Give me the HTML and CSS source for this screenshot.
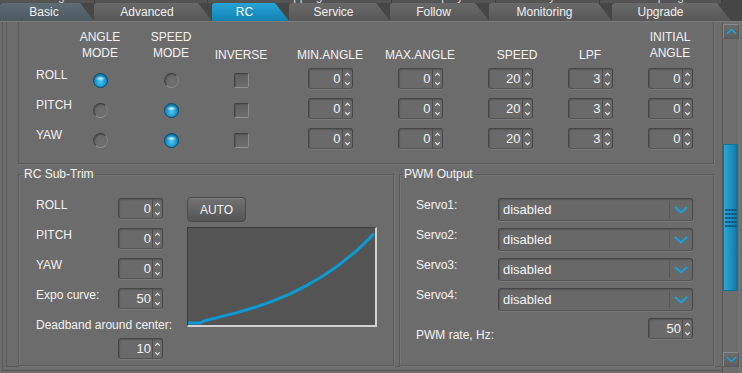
FILE: index.html
```html
<!DOCTYPE html>
<html>
<head>
<meta charset="utf-8">
<link rel="stylesheet" href="styles.css">
</head>
<body>
<svg class="defs" aria-hidden="true">
  <symbol id="spinarr" viewBox="0 0 9 19">
    <path d="M2.3 6.6 L4.5 4.4 L6.7 6.6 M2.3 13.4 L4.5 15.6 L6.7 13.4" fill="none" stroke="#ececec" stroke-width="1.3"/>
  </symbol>
  <symbol id="chev" viewBox="0 0 14 8">
    <path d="M1 1 L7 6.5 L13 1" fill="none" stroke="#1aa2dc" stroke-width="2"/>
  </symbol>
</svg>

<div class="tabbar">
  <div class="back-row">
    <div class="btab w95"><span>Debug</span></div>
    <div class="btab w113"><span>Filters</span></div>
    <div class="btab w184"><span>Mapping</span></div>
    <div class="btab w104"><span>Display</span></div>
    <div class="btab w104"><span>Analysis</span></div>
    <div class="btab w122"><span>Scripting</span></div>
  </div>
  <div class="front-row">
    <div class="tab basic">Basic</div>
    <div class="tab t-adv">Advanced</div>
    <div class="tab active t-rc">RC</div>
    <div class="tab t-svc">Service</div>
    <div class="tab t-fol">Follow</div>
    <div class="tab t-mon">Monitoring</div>
    <div class="tab t-upg">Upgrade</div>
  </div>
</div>

<div class="main">
  <div class="viewport">
    <div class="frame">
      <div class="frame2">
        <section class="axes">
          <div class="hdr"></div>
          <div class="hdr two">ANGLE<br>MODE</div>
          <div class="hdr two">SPEED<br>MODE</div>
          <div class="hdr">INVERSE</div>
          <div class="hdr">MIN.ANGLE</div>
          <div class="hdr">MAX.ANGLE</div>
          <div class="hdr shift">SPEED</div>
          <div class="hdr">LPF</div>
          <div class="hdr two">INITIAL<br>ANGLE</div>

          <div class="lbl">ROLL</div>
          <div class="ctl"><span class="radio on"></span></div>
          <div class="ctl"><span class="radio"></span></div>
          <div class="ctl"><span class="check"></span></div>
          <div class="ctl"><div class="spin"><span class="val">0</span><span class="arr"><svg><use href="#spinarr"/></svg></span></div></div>
          <div class="ctl"><div class="spin"><span class="val">0</span><span class="arr"><svg><use href="#spinarr"/></svg></span></div></div>
          <div class="ctl"><div class="spin"><span class="val">20</span><span class="arr"><svg><use href="#spinarr"/></svg></span></div></div>
          <div class="ctl"><div class="spin"><span class="val">3</span><span class="arr"><svg><use href="#spinarr"/></svg></span></div></div>
          <div class="ctl"><div class="spin"><span class="val">0</span><span class="arr"><svg><use href="#spinarr"/></svg></span></div></div>

          <div class="lbl">PITCH</div>
          <div class="ctl"><span class="radio"></span></div>
          <div class="ctl"><span class="radio on"></span></div>
          <div class="ctl"><span class="check"></span></div>
          <div class="ctl"><div class="spin"><span class="val">0</span><span class="arr"><svg><use href="#spinarr"/></svg></span></div></div>
          <div class="ctl"><div class="spin"><span class="val">0</span><span class="arr"><svg><use href="#spinarr"/></svg></span></div></div>
          <div class="ctl"><div class="spin"><span class="val">20</span><span class="arr"><svg><use href="#spinarr"/></svg></span></div></div>
          <div class="ctl"><div class="spin"><span class="val">3</span><span class="arr"><svg><use href="#spinarr"/></svg></span></div></div>
          <div class="ctl"><div class="spin"><span class="val">0</span><span class="arr"><svg><use href="#spinarr"/></svg></span></div></div>

          <div class="lbl">YAW</div>
          <div class="ctl"><span class="radio"></span></div>
          <div class="ctl"><span class="radio on"></span></div>
          <div class="ctl"><span class="check"></span></div>
          <div class="ctl"><div class="spin"><span class="val">0</span><span class="arr"><svg><use href="#spinarr"/></svg></span></div></div>
          <div class="ctl"><div class="spin"><span class="val">0</span><span class="arr"><svg><use href="#spinarr"/></svg></span></div></div>
          <div class="ctl"><div class="spin"><span class="val">20</span><span class="arr"><svg><use href="#spinarr"/></svg></span></div></div>
          <div class="ctl"><div class="spin"><span class="val">3</span><span class="arr"><svg><use href="#spinarr"/></svg></span></div></div>
          <div class="ctl"><div class="spin"><span class="val">0</span><span class="arr"><svg><use href="#spinarr"/></svg></span></div></div>
        </section>

        <div class="groups">
          <fieldset class="grp sub">
            <legend>RC Sub-Trim</legend>
            <div class="subgrid">
              <div class="lbl">ROLL</div>
              <div class="spin"><span class="val">0</span><span class="arr"><svg><use href="#spinarr"/></svg></span></div>
              <button class="auto">AUTO</button>

              <div class="lbl r2">PITCH</div>
              <div class="spin r2c"><span class="val">0</span><span class="arr"><svg><use href="#spinarr"/></svg></span></div>

              <div class="graph">
                <svg width="187" height="97" viewBox="0 0 187 97">
                  <polyline points="0,95 12,95 16,93 33,88.6 50,84.4 67,79.3 84,73.4 101,66.3 118,57.9 135,48 152,36.2 169,22.3 186,5.8" fill="none" stroke="#0b9ad3" stroke-width="3" stroke-linejoin="round"/>
                </svg>
              </div>

              <div class="lbl r3">YAW</div>
              <div class="spin r3c"><span class="val">0</span><span class="arr"><svg><use href="#spinarr"/></svg></span></div>

              <div class="lbl r4">Expo curve:</div>
              <div class="spin r4c"><span class="val">50</span><span class="arr"><svg><use href="#spinarr"/></svg></span></div>

              <div class="lbl r5">Deadband around center:</div>
              <div class="spin r6c"><span class="val">10</span><span class="arr"><svg><use href="#spinarr"/></svg></span></div>
            </div>
          </fieldset>

          <fieldset class="grp pwm">
            <legend>PWM Output</legend>
            <div class="pwmgrid">
              <div class="lbl">Servo1:</div>
              <div class="combo"><span class="ctext">disabled</span><span class="drop"><svg width="14" height="8"><use href="#chev"/></svg></span></div>
              <div class="lbl">Servo2:</div>
              <div class="combo"><span class="ctext">disabled</span><span class="drop"><svg width="14" height="8"><use href="#chev"/></svg></span></div>
              <div class="lbl">Servo3:</div>
              <div class="combo"><span class="ctext">disabled</span><span class="drop"><svg width="14" height="8"><use href="#chev"/></svg></span></div>
              <div class="lbl">Servo4:</div>
              <div class="combo"><span class="ctext">disabled</span><span class="drop"><svg width="14" height="8"><use href="#chev"/></svg></span></div>
              <div class="lbl rate">PWM rate, Hz:</div>
              <div class="spin rspin"><span class="val">50</span><span class="arr"><svg><use href="#spinarr"/></svg></span></div>
            </div>
          </fieldset>
        </div>
      </div>
    </div>
  </div>

  <div class="scroll">
    <div class="sbtn"><svg width="11" height="7" viewBox="0 0 14 8" class="up"><use href="#chev"/></svg></div>
    <div class="track">
      <div class="thumb"><span class="grip"></span></div>
    </div>
    <div class="sbtn"><svg width="11" height="7" viewBox="0 0 14 8"><use href="#chev"/></svg></div>
  </div>
</div>
</body>
</html>
```

FILE: styles.css
```css
html, body {
  margin: 0;
  padding: 0;
}
body {
  width: 742px;
  height: 373px;
  overflow: hidden;
  background: #6c6c6c;
  font-family: "Liberation Sans", Arial, sans-serif;
  font-size: 12px;
  color: #f3f3f3;
}
.defs {
  position: absolute;
  width: 0;
  height: 0;
  overflow: hidden;
}

/* ---------- tabs ---------- */
.tabbar {
  height: 22px;
  box-sizing: border-box;
  background: #464646;
  border-bottom: 1px solid #7b7b7b;
}
.back-row {
  display: flex;
  height: 3px;
  overflow: hidden;
}
.btab {
  flex: none;
  height: 3px;
  overflow: hidden;
  text-align: center;
  color: #d8d8d8;
  background: #545454;
  border-right: 1px solid #3e3e3e;
  box-sizing: border-box;
}
.btab span {
  display: block;
  margin-top: -11px;
  line-height: 14px;
}
.w95 { width: 95px; }
.w113 { width: 113px; }
.w184 { width: 184px; }
.w104 { width: 104px; }
.w122 { width: 122px; }

.front-row {
  display: flex;
  height: 18px;
}
.tab {
  flex: none;
  height: 18px;
  line-height: 18px;
  box-sizing: border-box;
  padding-right: 12px;
  text-align: center;
  color: #f0f0f0;
  background: linear-gradient(#696969, #575757);
  border-radius: 3px 0 0 0;
  clip-path: polygon(0 0, calc(100% - 14px) 0, 100% 100%, 0 100%);
}
.tab.basic {
  width: 94px;
  padding-left: 6px;
  background: linear-gradient(#5d6c75, #4a5860);
}
.t-adv { width: 118px; }
.t-rc { width: 77px; }
.t-svc { width: 101px; }
.t-fol { width: 99px; }
.t-mon { width: 123px; }
.t-upg { width: 119px; padding-right: 22px; }
.tab.active {
  background: linear-gradient(#26a3d6, #1282b4);
  color: #fff;
}

/* ---------- main area ---------- */
.main {
  display: flex;
  height: 351px;
}
.viewport {
  width: 722px;
  padding-left: 2px;
  box-sizing: border-box;
}
.frame {
  height: 349px;
  box-sizing: border-box;
  border-left: 1px solid #585858;
  border-bottom: 1px solid #585858;
  padding: 0 0 3px 3px;
}
.frame2 {
  height: 345px;
  box-sizing: border-box;
  border-left: 1px solid #5a5a5a;
  border-bottom: 1px solid #5a5a5a;
  padding-left: 11px;
}

/* ---------- axes table ---------- */
.axes {
  width: 696px;
  height: 142px;
  box-sizing: border-box;
  border: 1px solid #5a5a5a;
  border-top: none;
  box-shadow: 1px 1px 0 #767676;
  padding-left: 17px;
  display: grid;
  grid-template-columns: 29px 70px 72px 68px 110px 70px 110px 50px 110px;
  grid-template-rows: 46px 30px 30px 30px;
}
.hdr {
  align-self: end;
  justify-self: center;
  text-align: center;
  white-space: nowrap;
  line-height: 16px;
  padding-bottom: 5px;
}
.hdr.two {
  padding-bottom: 7px;
}
.hdr.shift {
  padding-left: 14px;
}
.lbl {
  white-space: nowrap;
  line-height: 14px;
  align-self: start;
  justify-self: start;
}
.ctl {
  justify-self: center;
  align-self: start;
}

.radio {
  display: block;
  margin-top: 5px;
  width: 15px;
  height: 15px;
  box-sizing: border-box;
  border-radius: 50%;
  border: 1px solid;
  border-color: #3c3c3c #808080 #8e8e8e #434343;
  background: radial-gradient(circle at 60% 65%, #707070, #626262);
  box-shadow: inset 1px 1px 0 #555;
}
.radio.on {
  border-color: #0a4866;
  box-shadow: none;
  background:
    radial-gradient(ellipse 5px 2.5px at 50% 35%, rgba(235, 250, 255, 0.95), rgba(160, 225, 250, 0) 100%),
    radial-gradient(circle at 50% 62%, #4cc6f2 0, #1b9ad2 45%, #0d6f9e 80%, #0a5578 100%);
}
.check {
  display: block;
  margin-top: 5px;
  width: 15px;
  height: 15px;
  box-sizing: border-box;
  border-radius: 2px;
  border: 1px solid;
  border-color: #404040 #8c8c8c #929292 #454545;
  background: linear-gradient(#5f5f5f, #6d6d6d);
  box-shadow: inset 1px 1px 0 #575757;
}

/* ---------- spin box ---------- */
.spin {
  display: flex;
  width: 45px;
  height: 21px;
  box-sizing: border-box;
  border: 1px solid #464646;
  border-bottom-color: #555;
  border-radius: 3px;
  background: #6a6a6a;
  box-shadow: inset 1px 1px 1px #585858, 0 1px 0 #7a7a7a;
}
.spin .val {
  flex: 1;
  text-align: right;
  padding-right: 1px;
  font-size: 13px;
  line-height: 19px;
  color: #f5f5f5;
}
.spin .arr {
  width: 9px;
  border-left: 1px solid #4e4e4e;
  display: block;
}
.spin .arr svg {
  display: block;
  width: 9px;
  height: 19px;
}

/* ---------- groups ---------- */
.groups {
  display: flex;
  gap: 5px;
  margin-top: 3px;
  height: 199px;
}
.grp {
  margin: 0;
  padding: 0;
  min-width: 0;
  height: 199px;
  box-sizing: border-box;
  border: 1px solid #5a5a5a;
  box-shadow: 1px 1px 0 #767676, inset 1px 1px 0 #767676;
}
.grp legend {
  margin-left: 4px;
  padding: 0 1px;
  line-height: 14px;
  font-size: 12px;
}
.grp.sub { width: 376px; }
.grp.pwm { width: 315px; }
.grp.pwm legend { margin-left: 3px; }

.subgrid {
  margin: 17px 0 0 17px;
  display: grid;
  grid-template-columns: 82px 45px 24px 190px;
  grid-template-rows: 30px 30px 30px 30px 20px 21px;
}
.subgrid .lbl { grid-column: 1; }
.subgrid .spin { grid-column: 2; }
.r2 { grid-row: 2; }
.r2c { grid-row: 2; }
.r3 { grid-row: 3; }
.r3c { grid-row: 3; }
.r4 { grid-row: 4; }
.r4c { grid-row: 4; }
.subgrid .r5 { grid-row: 5; grid-column: 1 / 4; }
.r6c { grid-row: 6; }

.auto {
  grid-column: 4;
  grid-row: 1;
  justify-self: start;
  align-self: start;
  margin-top: -1px;
  width: 59px;
  height: 25px;
  box-sizing: border-box;
  border: 1px solid #4a4a4a;
  border-radius: 4px;
  background: linear-gradient(#727272, #545454);
  box-shadow: inset 0 1px 0 #7e7e7e;
  color: #f2f2f2;
  font-family: "Liberation Sans", Arial, sans-serif;
  font-size: 12px;
  padding: 0;
}
.graph {
  grid-column: 4;
  grid-row: 2 / 6;
  align-self: start;
  margin-top: -1px;
  width: 190px;
  height: 100px;
  box-sizing: border-box;
  border-top: 1px solid #3c3c3c;
  border-left: 1px solid #3c3c3c;
  border-right: 2px solid #d2d2d2;
  border-bottom: 2px solid #d2d2d2;
  background: #545454;
}
.graph svg { display: block; }

.pwmgrid {
  margin: 17px 0 0 16px;
  display: grid;
  grid-template-columns: 82px 195px;
  grid-template-rows: 30px 30px 30px 30px 21px;
}
.lbl.rate { margin-top: 10px; }
.rspin { justify-self: end; }

.combo {
  display: flex;
  width: 195px;
  height: 23px;
  box-sizing: border-box;
  border: 1px solid #464646;
  border-bottom-color: #555;
  border-radius: 3px;
  background: #686868;
  box-shadow: inset 1px 1px 1px #575757, 0 1px 0 #7a7a7a;
}
.ctext {
  flex: 1;
  padding-left: 4px;
  font-size: 13px;
  line-height: 21px;
  color: #f5f5f5;
}
.drop {
  width: 22px;
  margin: 2px 0;
  border-left: 1px solid #565656;
  display: flex;
  align-items: center;
  justify-content: center;
}

/* ---------- scrollbar ---------- */
.scroll {
  width: 20px;
  box-sizing: border-box;
  border-left: 1px solid #575757;
  background: linear-gradient(to right, #6e6e6e 0, #6e6e6e 16px, #7a7a7a 16px, #6a6a6a 19px);
  display: flex;
  flex-direction: column;
  padding: 2px 0 6px 0;
}
.sbtn {
  width: 16px;
  height: 15px;
  box-sizing: border-box;
  border: 1px solid #8a8a8a;
  border-right-color: #575757;
  border-bottom-color: #575757;
  background: linear-gradient(#6c6c6c, #5e5e5e);
  display: flex;
  align-items: center;
  justify-content: center;
}
.sbtn svg.up { transform: rotate(180deg); }
.track {
  flex: 1;
}
.thumb {
  margin-top: 105px;
  width: 15px;
  height: 147px;
  box-sizing: border-box;
  border: 1px solid #126f9a;
  background: linear-gradient(to right, #2aa5d6, #1b8fc2 55%, #1275a3);
  display: flex;
  align-items: center;
  justify-content: center;
}
.grip {
  display: block;
  width: 12px;
  height: 20px;
  background-image: radial-gradient(circle, #0b5478 1px, transparent 1.4px);
  background-size: 3px 4px;
}
```
